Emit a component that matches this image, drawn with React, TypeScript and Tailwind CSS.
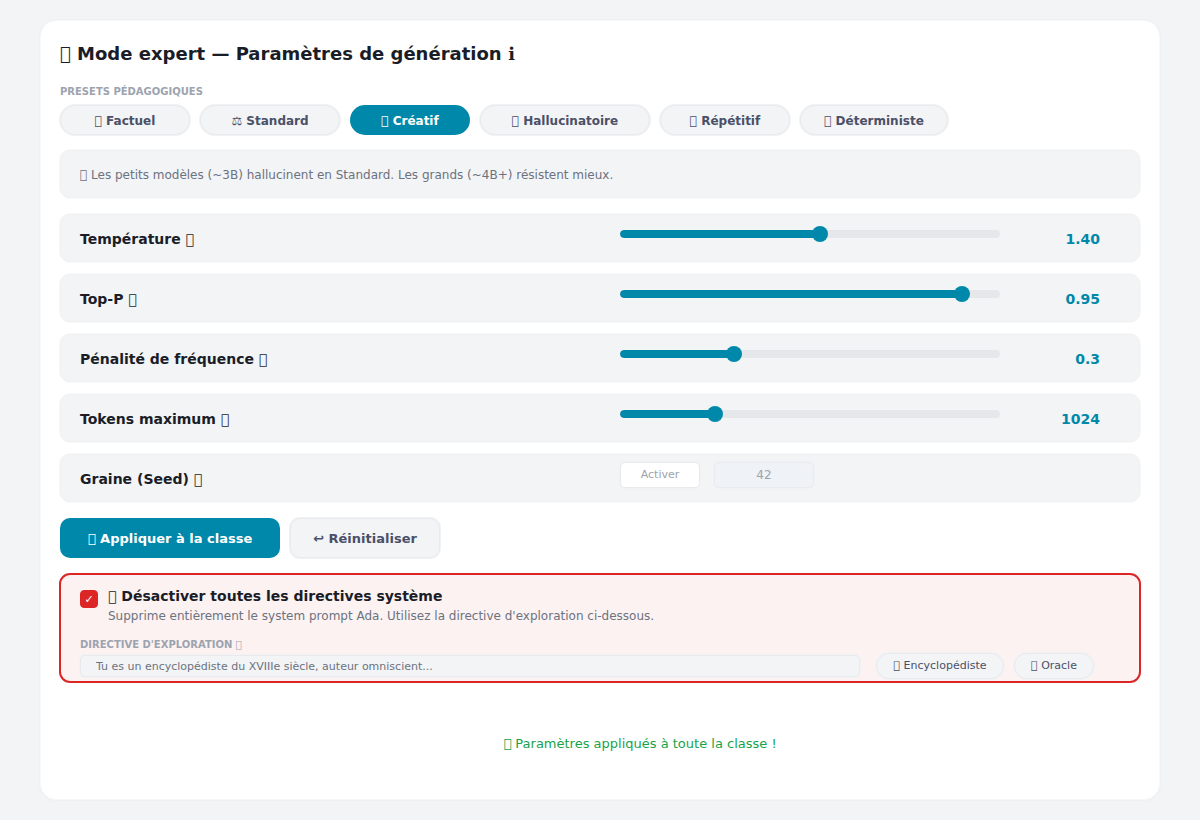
import { useState } from "react";
import clsx from "clsx";

// private-use code point, drawn as the font's empty box
const BOX = "\u{10FFFD}";

const presets = [
  { icon: BOX, label: "Factuel", width: "min-w-[130px]" },
  { icon: "⚖", label: "Standard", width: "min-w-[140px]" },
  { icon: BOX, label: "Créatif", width: "min-w-[120px]" },
  { icon: BOX, label: "Hallucinatoire", width: "min-w-[170px]" },
  { icon: BOX, label: "Répétitif", width: "min-w-[130px]" },
  { icon: BOX, label: "Déterministe", width: "min-w-[148px]" },
];

const params = [
  { id: "temperature", label: "Température", min: 0, max: 2.66, step: 0.01, value: 1.4, digits: 2 },
  { id: "top-p", label: "Top-P", min: 0.5, max: 1, step: 0.01, value: 0.95, digits: 2 },
  { id: "frequency", label: "Pénalité de fréquence", min: 0, max: 1, step: 0.1, value: 0.3, digits: 1 },
  { id: "tokens", label: "Tokens maximum", min: 0, max: 4096, step: 64, value: 1024, digits: 0 },
];

const panel = "flex h-12 items-center rounded-[10px] border border-[#eff0f2] bg-[#f3f4f6] px-[19px] pt-[2px] ring-1 ring-[#f8f9fa]";
const outlined = "border border-[#e8eaed] ring-1 ring-[#f1f2f4]";
const rowLabel = "flex-1 text-sm font-bold text-[#1a1d27]";

type Param = (typeof params)[number];

const ParamRow = ({ param }: { param: Param }) => {
  const [value, setValue] = useState(param.value);
  const percent = ((value - param.min) / (param.max - param.min)) * 100;

  return (
    <div className={panel}>
      <label htmlFor={param.id} className={rowLabel}>
        {param.label} {BOX}
      </label>
      <div className="mt-[9px] grid w-[380px] items-center self-start">
        <div className="col-start-1 row-start-1 h-2 overflow-hidden rounded-full bg-gray-200">
          <div className="h-full rounded-l-full bg-[#0088aa]" style={{ width: `${percent}%` }} />
        </div>
        {/* wider than the bar by half a thumb on each side */}
        <input
          id={param.id}
          type="range"
          min={param.min}
          max={param.max}
          step={param.step}
          value={value}
          onChange={(e) => setValue(Number(e.target.value))}
          className="col-start-1 row-start-1 -mx-2 h-4 cursor-pointer appearance-none bg-transparent [&::-webkit-slider-thumb]:size-4 [&::-webkit-slider-thumb]:appearance-none [&::-webkit-slider-thumb]:rounded-full [&::-webkit-slider-thumb]:bg-[#0088aa]"
        />
      </div>
      <output htmlFor={param.id} className="mr-5 w-[100px] text-right text-sm font-bold text-[#0088aa]">
        {value.toFixed(param.digits)}
      </output>
    </div>
  );
};

const App = () => {
  const [preset, setPreset] = useState("Créatif");

  return (
    <div className="flex min-h-screen bg-[#f3f4f6] px-10 py-5 font-['DejaVu_Sans',sans-serif]">
      <main className="flex-1 rounded-2xl border border-[#f7f8f9] bg-white px-[19px] pt-[21px] ring-1 ring-[#eff0f2]">
        <h1 className="text-lg leading-6 font-bold text-[#1a1d27]">{BOX} Mode expert — Paramètres de génération ℹ</h1>

        <h2 className="mt-5 text-[10px] leading-3 font-bold text-[#9ca3af]">PRESETS PÉDAGOGIQUES</h2>
        <div className="mt-[7px] flex flex-wrap gap-[10px]">
          {presets.map(({ icon, label, width }) => (
            <button
              key={label}
              type="button"
              aria-pressed={preset === label}
              onClick={() => setPreset(label)}
              className={clsx(
                "h-[30px] rounded-full pt-px text-xs font-bold",
                width,
                preset === label ? "bg-[#0088aa] text-white" : [outlined, "bg-[#f3f4f6] text-[#4a5068]"],
              )}
            >
              {icon} {label}
            </button>
          ))}
        </div>

        <p className={clsx(panel, "mt-[15px] text-xs text-[#6b7280]")}>
          {BOX} Les petits modèles (~3B) hallucinent en Standard. Les grands (~4B+) résistent mieux.
        </p>

        <div className="mt-4 flex flex-col gap-3">
          {params.map((param) => (
            <ParamRow key={param.id} param={param} />
          ))}
          <div className={panel}>
            <label htmlFor="seed" className={rowLabel}>
              Graine (Seed) {BOX}
            </label>
            <div className="mt-[5px] mr-5 flex w-[480px] gap-[14px] self-start">
              <button type="button" className={clsx(outlined, "h-[26px] w-20 rounded-[5px] bg-white pt-px text-[11px] text-[#9ca3af]")}>
                Activer
              </button>
              <input
                id="seed"
                type="text"
                disabled
                defaultValue="42"
                className={clsx(outlined, "h-[26px] w-[100px] rounded-[5px] bg-[#eff2f7] text-center text-xs text-[#9ca3af]")}
              />
            </div>
          </div>
        </div>

        <div className="mt-4 flex gap-[10px]">
          <button type="button" className="h-10 w-[220px] rounded-[10px] bg-[#0088aa] pt-px text-[13px] font-bold text-white">
            {BOX} Appliquer à la classe
          </button>
          <button type="button" className={clsx(outlined, "h-10 w-[150px] rounded-[10px] bg-[#f3f4f6] pt-px text-[13px] font-bold text-[#4a5068]")}>
            ↩ Réinitialiser
          </button>
        </div>

        <section className="-mx-px mt-[15px] h-[110px] rounded-[11px] border-2 border-[#dc2626] bg-[#fdf2f2] px-[19px] pt-[11px]">
          <div className="flex gap-[10px]">
            <input
              id="no-directives"
              type="checkbox"
              defaultChecked
              className="mt-1 grid size-[18px] appearance-none place-items-center rounded border border-[#dc2626] bg-white text-[11px] leading-none text-white checked:bg-[#dc2626] checked:before:content-['✓']"
            />
            <div>
              <label htmlFor="no-directives" className="block text-sm leading-5 font-bold text-[#1a1d27]">
                {BOX} Désactiver toutes les directives système
              </label>
              <p className="text-xs leading-5 text-[#6b7280]">
                Supprime entièrement le system prompt Ada. Utilisez la directive d'exploration ci-dessous.
              </p>
            </div>
          </div>
          <label htmlFor="directive" className="mt-[13px] block text-[10px] leading-3 font-bold text-[#9ca3af]">
            DIRECTIVE D'EXPLORATION {BOX}
          </label>
          <div className="mt-[2px] flex items-center gap-[10px] pr-[26px]">
            <input
              id="directive"
              type="text"
              defaultValue="Tu es un encyclopédiste du XVIIIe siècle, auteur omniscient..."
              className={clsx(outlined, "mr-[6px] h-[22px] flex-1 rounded-[5px] bg-[#f3f4f6] px-[15px] text-[11px] text-[#6b7280]")}
            />
            <button type="button" className={clsx(outlined, "h-[26px] w-32 rounded-full bg-[#f3f4f6] pt-px text-[11px] text-[#4a5068]")}>
              {BOX} Encyclopédiste
            </button>
            <button type="button" className={clsx(outlined, "h-[26px] w-20 rounded-full bg-[#f3f4f6] pt-px text-[11px] text-[#4a5068]")}>
              {BOX} Oracle
            </button>
          </div>
        </section>

        <p role="status" className="mt-[51px] pl-20 text-center text-[13px] leading-5 text-[#16a34a]">
          {BOX} Paramètres appliqués à toute la classe !
        </p>
      </main>
    </div>
  );
};

export default App;
